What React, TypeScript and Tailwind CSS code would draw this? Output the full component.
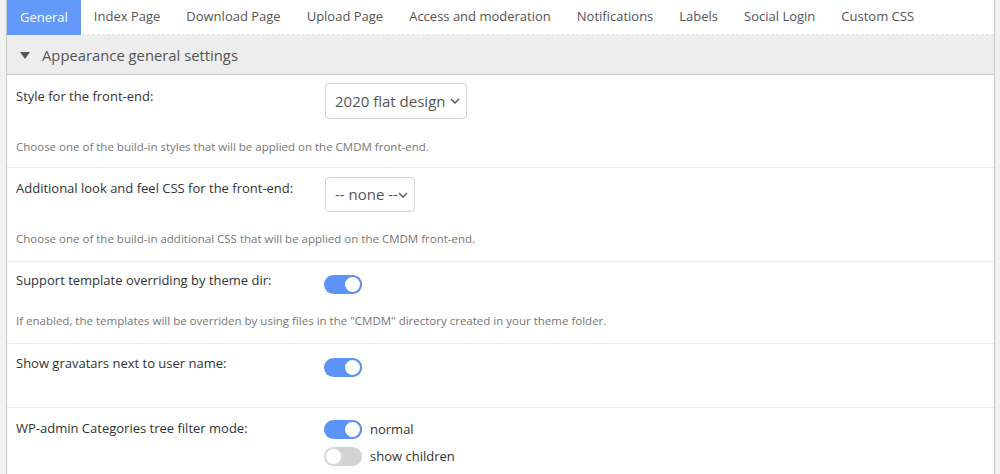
import React from "react";

const font = { fontFamily: '"Open Sans", "Noto Sans", sans-serif' };

function Toggle({ on }: { on: boolean }) {
  return on ? (
    <div className="w-[38px] h-[19px] rounded-full bg-[#5d93f7] flex items-center justify-end">
      <div className="w-[19px] h-[19px] rounded-full bg-white border-[2px] border-[#5d93f7]" />
    </div>
  ) : (
    <div className="w-[38px] h-[19px] rounded-full bg-[#d2d2d2] flex items-center justify-start">
      <div className="w-[19px] h-[19px] rounded-full bg-white border-[2px] border-[#dadada]" />
    </div>
  );
}

function Select({ text, w, h }: { text: string; w: string; h: string }) {
  return (
    <div className={`${w} ${h} border border-[#d4d4d4] rounded-[4px] bg-white flex items-center pl-[9px] relative overflow-hidden`}>
      <span className="text-[15px] text-[#555] whitespace-nowrap">{text}</span>
      <svg className="absolute right-[6px] top-1/2 -translate-y-1/2" width="10" height="6" viewBox="0 0 10 6">
        <path d="M1 1 L5 5 L9 1" fill="none" stroke="#555" strokeWidth="1.4" />
      </svg>
    </div>
  );
}

const tabs = [
  "General",
  "Index Page",
  "Download Page",
  "Upload Page",
  "Access and moderation",
  "Notifications",
  "Labels",
  "Social Login",
  "Custom CSS",
];

export default function App() {
  return (
    <div className="w-[1000px] h-[474px] bg-[#f1f1f1] overflow-hidden" style={font}>
      <div className="ml-[6px] w-[989px] h-full bg-white border-x border-[#c8c8c8]">
        <div className="flex h-[35px] border-b border-dashed border-[#e4e4e4]">
          {tabs.map((t, i) => (
            <div
              key={t}
              className={`px-[13px] flex items-center text-[13px] ${
                i === 0 ? "bg-[#6399f8] text-white mb-[-1px]" : "text-[#555]"
              }`}
            >
              {t}
            </div>
          ))}
        </div>
        <div className="h-[40px] bg-[#ededed] border-b border-[#cccccc] flex items-center pl-[13px] pt-[2px]">
          <svg width="10" height="8" viewBox="0 0 10 8" className="mr-[12px]">
            <path d="M0 0 L10 0 L5 7 Z" fill="#555" />
          </svg>
          <span className="text-[14.8px] text-[#555]">Appearance general settings</span>
        </div>

        {/* Row 1 */}
        <div className="border-b border-[#ececec] pl-[9px] pt-[8px] pb-[12px]">
          <div className="flex">
            <div className="w-[309px] pt-[4px] text-[13px] leading-[18px] text-[#333]">Style for the front-end:</div>
            <Select text="2020 flat design" w="w-[142px]" h="h-[36px]" />
          </div>
          <div className="mt-[20px] text-[11.5px] leading-[16px] text-[#777]">
            Choose one of the build-in styles that will be applied on the CMDM front-end.
          </div>
        </div>

        {/* Row 2 */}
        <div className="border-b border-[#ececec] pl-[9px] pt-[9px] pb-[14px]">
          <div className="flex">
            <div className="w-[309px] pt-[2px] text-[13px] leading-[18px] text-[#333]">
              Additional look and feel CSS for the front-end:
            </div>
            <Select text="-- none --" w="w-[90px]" h="h-[35px]" />
          </div>
          <div className="mt-[19px] text-[11.5px] leading-[16px] text-[#777]">
            Choose one of the build-in additional CSS that will be applied on the CMDM front-end.
          </div>
        </div>

        {/* Row 3 */}
        <div className="border-b border-[#ececec] pl-[9px] pt-[9px] pb-[14px]">
          <div className="flex">
            <div className="w-[308px] text-[13px] leading-[18px] text-[#333]">
              Support template overriding by theme dir:
            </div>
            <div className="mt-[4px]">
              <Toggle on />
            </div>
          </div>
          <div className="mt-[19px] text-[11.5px] leading-[16px] text-[#777]">
            If enabled, the templates will be overriden by using files in the "CMDM" directory created in your theme folder.
          </div>
        </div>

        {/* Row 4 */}
        <div className="border-b border-[#ececec] pl-[9px] pt-[10px] pb-[30px]">
          <div className="flex">
            <div className="w-[308px] text-[13px] leading-[18px] text-[#333]">Show gravatars next to user name:</div>
            <div className="mt-[4px]">
              <Toggle on />
            </div>
          </div>
        </div>

        {/* Row 5 */}
        <div className="pl-[9px] pt-[11px]">
          <div className="flex">
            <div className="w-[308px] text-[13px] leading-[18px] text-[#333]">
              WP-admin Categories tree filter mode:
            </div>
            <div className="mt-[1px] flex flex-col gap-[7px]">
              <div className="flex items-center gap-[8px]">
                <Toggle on />
                <span className="text-[13px] text-[#333]">normal</span>
              </div>
              <div className="flex items-center gap-[8px]">
                <Toggle on={false} />
                <span className="text-[13px] text-[#333]">show children</span>
              </div>
            </div>
          </div>
        </div>
      </div>
    </div>
  );
}
